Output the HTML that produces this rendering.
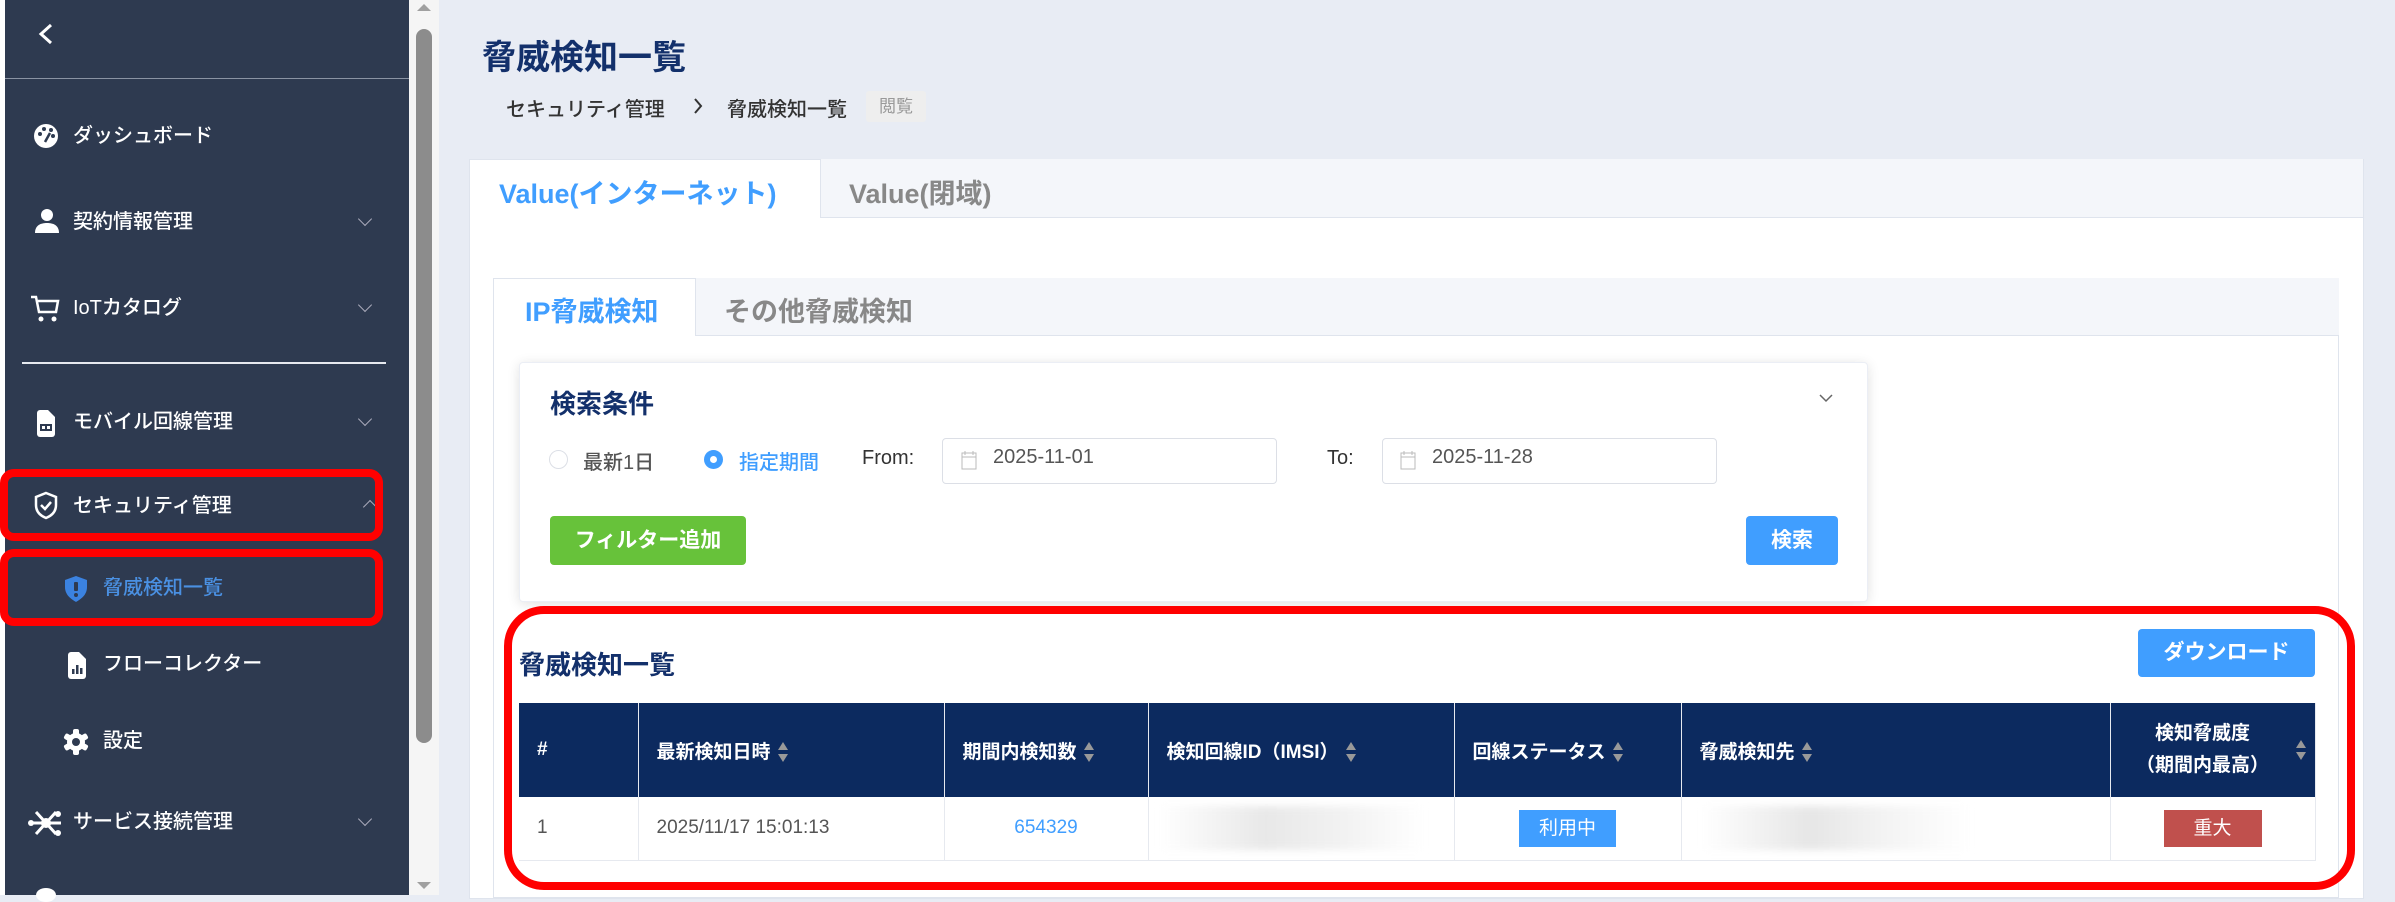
<!DOCTYPE html>
<html><head><meta charset="utf-8">
<style>
*{box-sizing:border-box;margin:0;padding:0}
body{width:2395px;height:895px;overflow:hidden;background:#e8ecf4;font-family:"Liberation Sans","Noto Sans CJK JP",sans-serif;position:relative}
.a{position:absolute}
.sb{left:5px;top:0;width:404px;height:895px;background:#2e3a50}
.mi{position:absolute;color:#fff;font-size:20px;line-height:24px;white-space:nowrap;font-weight:500}
.chev{position:absolute;left:360px;width:10px;height:10px;border-right:1.5px solid #aab;border-bottom:1.5px solid #aab;transform:rotate(45deg)}
.red{position:absolute;border:8px solid #ff0000;border-radius:14px}
.t{position:absolute;white-space:nowrap}
th,td{border-right:1px solid #e6e9ef}
.s{display:inline-block;vertical-align:middle;margin-left:6px}
</style></head><body>
<div style="position:absolute;left:0;top:0;width:5px;height:895px;background:#fff"></div>
<div class="a sb"></div>
<svg class="a" style="left:36px;top:22px" width="20" height="24" viewBox="0 0 20 24"><path d="M15 3L5 12l10 9" stroke="#fff" stroke-width="3" fill="none"/></svg>
<div class="a" style="left:5px;top:78px;width:404px;height:1px;background:#8a93a3"></div>
<svg class="a" style="left:32px;top:123px" width="28" height="26" viewBox="0 0 28 26"><circle cx="14" cy="13" r="12" fill="#fff"/><circle cx="8" cy="11" r="2" fill="#2e3a50"/><circle cx="12" cy="6" r="2" fill="#2e3a50"/><circle cx="19" cy="7" r="2" fill="#2e3a50"/><circle cx="21" cy="13" r="2" fill="#2e3a50"/><path d="M13 19l5-9" stroke="#2e3a50" stroke-width="2.5"/></svg>
<div class="mi" style="left:73px;top:124px">ダッシュボード</div>
<svg class="a" style="left:34px;top:208px" width="26" height="26" viewBox="0 0 26 26"><circle cx="13" cy="7" r="6" fill="#fff"/><path d="M1 25c0-8 6-10 12-10s12 2 12 10z" fill="#fff"/></svg>
<div class="mi" style="left:73px;top:210px">契約情報管理</div><div class="chev" style="top:214px"></div>
<svg class="a" style="left:29px;top:294px" width="32" height="30" viewBox="0 0 32 30"><path d="M2 3h5l3 15h17l2-11H9" stroke="#fff" stroke-width="2.5" fill="none"/><circle cx="12" cy="25" r="2.5" fill="#fff"/><circle cx="25" cy="25" r="2.5" fill="#fff"/></svg>
<div class="mi" style="left:73px;top:296px">IoTカタログ</div><div class="chev" style="top:300px"></div>
<div class="a" style="left:22px;top:362px;width:364px;height:2px;background:#e6e9ef"></div>
<svg class="a" style="left:35px;top:409px" width="22" height="28" viewBox="0 0 22 28"><path d="M2 4a3 3 0 013-3h8l7 7v17a3 3 0 01-3 3H5a3 3 0 01-3-3z" fill="#fff"/><rect x="5" y="15" width="12" height="7" fill="#2e3a50"/><rect x="7" y="17" width="3" height="3" fill="#fff"/><rect x="12" y="17" width="3" height="3" fill="#fff"/></svg>
<div class="mi" style="left:73px;top:410px">モバイル回線管理</div><div class="chev" style="top:414px"></div>
<svg class="a" style="left:33px;top:491px" width="26" height="30" viewBox="0 0 26 30"><path d="M13 2l10 4v8c0 7-5 11-10 13C8 25 3 21 3 14V6z" stroke="#fff" stroke-width="2.5" fill="none"/><path d="M8 14l4 4 6-7" stroke="#fff" stroke-width="2.5" fill="none"/></svg>
<div class="mi" style="left:73px;top:494px">セキュリティ管理</div>
<div class="a" style="left:365px;top:502px;width:10px;height:10px;border-left:1.5px solid #aab;border-top:1.5px solid #aab;transform:rotate(45deg)"></div>
<svg class="a" style="left:63px;top:575px" width="26" height="28" viewBox="0 0 26 28"><path d="M13 1l11 4v7c0 8-6 12-11 15C8 24 2 20 2 12V5z" fill="#3b82e0"/><rect x="11" y="7" width="4" height="9" rx="1" fill="#2e3a50"/><circle cx="13" cy="20" r="2" fill="#2e3a50"/></svg>
<div class="mi" style="left:103px;top:576px;color:#4a90e2">脅威検知一覧</div>
<svg class="a" style="left:66px;top:651px" width="22" height="28" viewBox="0 0 22 28"><path d="M2 4a3 3 0 013-3h8l7 7v17a3 3 0 01-3 3H5a3 3 0 01-3-3z" fill="#fff"/><rect x="6" y="18" width="2.5" height="5" fill="#2e3a50"/><rect x="10" y="14" width="2.5" height="9" fill="#2e3a50"/><rect x="14" y="17" width="2.5" height="6" fill="#2e3a50"/></svg>
<div class="mi" style="left:103px;top:652px">フローコレクター</div>
<svg class="a" style="left:62px;top:728px" width="28" height="28" viewBox="0 0 28 28"><g fill="#fff"><circle cx="14" cy="14" r="9"/><rect x="11" y="1" width="6" height="26" rx="2"/><rect x="11" y="1" width="6" height="26" rx="2" transform="rotate(60 14 14)"/><rect x="11" y="1" width="6" height="26" rx="2" transform="rotate(120 14 14)"/></g><circle cx="14" cy="14" r="4" fill="#2e3a50"/></svg>
<div class="mi" style="left:103px;top:729px">設定</div>
<svg class="a" style="left:28px;top:808px" width="36" height="30" viewBox="0 0 36 30"><g stroke="#fff" stroke-width="3"><path d="M3 15h30M8 4l20 22M28 4L8 26"/></g><circle cx="18" cy="15" r="5" fill="#fff"/><circle cx="3" cy="15" r="3" fill="#fff"/><circle cx="30" cy="6" r="3" fill="#fff"/><circle cx="30" cy="25" r="3" fill="#fff"/></svg>
<div class="mi" style="left:73px;top:810px">サービス接続管理</div><div class="chev" style="top:814px"></div>
<div class="a" style="left:36px;top:888px;width:20px;height:14px;border-radius:50%;background:#fff"></div>
<div class="red" style="left:0;top:469px;width:383px;height:72px"></div>
<div class="red" style="left:0;top:549px;width:383px;height:77px"></div>
<div class="a" style="left:409px;top:0;width:30px;height:895px;background:#f5f5f5"></div>
<div class="a" style="left:416px;top:29px;width:16px;height:714px;background:#8c8c8c;border-radius:8px"></div>
<div class="a" style="left:417px;top:4px;width:0;height:0;border-left:7px solid transparent;border-right:7px solid transparent;border-bottom:7px solid #a0a0a0"></div>
<div class="a" style="left:417px;top:882px;width:0;height:0;border-left:7px solid transparent;border-right:7px solid transparent;border-top:7px solid #a0a0a0"></div>

<div class="t" style="left:482px;top:30px;font-size:34px;font-weight:bold;color:#13306b">脅威検知一覧</div>
<div class="t" style="left:506px;top:93px;font-size:20px;color:#333;font-weight:500">セキュリティ管理</div>
<svg class="a" style="left:692px;top:96px" width="12" height="20" viewBox="0 0 12 20"><path d="M3 3l6 7-6 7" stroke="#333" stroke-width="2" fill="none"/></svg>
<div class="t" style="left:727px;top:93px;font-size:20px;color:#333;font-weight:500">脅威検知一覧</div>
<div class="t" style="left:866px;top:91px;width:60px;height:31px;background:#eeeeee;color:#999;font-size:17px;line-height:31px;text-align:center;border-radius:3px">閲覧</div>

<div class="a" style="left:469px;top:159px;width:1895px;height:740px;background:#fff;border:1px solid #dfe4ed"></div>
<div class="a" style="left:820px;top:159px;width:1544px;height:59px;background:#f4f6fa;border:1px solid #dfe4ed;border-top:none"></div>
<div class="t" style="left:499px;top:172px;font-size:27px;font-weight:bold;color:#409eff">Value(インターネット)</div>
<div class="t" style="left:849px;top:172px;font-size:27px;font-weight:bold;color:#888">Value(閉域)</div>

<div class="a" style="left:493px;top:278px;width:1846px;height:620px;background:#fff;border:1px solid #dfe4ed"></div>
<div class="a" style="left:695px;top:278px;width:1644px;height:58px;background:#f4f6fa;border-bottom:1px solid #dfe4ed;border-left:1px solid #dfe4ed"></div>
<div class="t" style="left:525px;top:290px;font-size:27px;font-weight:bold;color:#409eff">IP脅威検知</div>
<div class="t" style="left:724px;top:290px;font-size:27px;font-weight:bold;color:#888">その他脅威検知</div>

<div class="a" style="left:519px;top:362px;width:1349px;height:240px;background:#fff;border:1px solid #ebeef5;border-radius:4px;box-shadow:0 2px 12px rgba(0,0,0,.12)"></div>
<div class="t" style="left:550px;top:384px;font-size:26px;font-weight:bold;color:#13306b">検索条件</div>
<svg class="a" style="left:1819px;top:393px" width="14" height="10" viewBox="0 0 14 10"><path d="M1 2l6 6 6-6" stroke="#666" stroke-width="1.5" fill="none"/></svg>
<div class="a" style="left:549px;top:450px;width:19px;height:19px;border:1px solid #dcdfe6;border-radius:50%"></div>
<div class="t" style="left:583px;top:446px;font-size:20px;color:#555;font-weight:500">最新1日</div>
<div class="a" style="left:704px;top:450px;width:19px;height:19px;background:#409eff;border-radius:50%"></div>
<div class="a" style="left:710px;top:456px;width:7px;height:7px;background:#fff;border-radius:50%"></div>
<div class="t" style="left:739px;top:446px;font-size:20px;color:#409eff;font-weight:500">指定期間</div>
<div class="t" style="left:862px;top:447px;font-size:20px;color:#333">From:</div>
<div class="a" style="left:942px;top:438px;width:335px;height:46px;border:1px solid #dcdfe6;border-radius:4px"></div>
<svg class="a" style="left:961px;top:450px" width="16" height="20" viewBox="0 0 16 20"><rect x="1" y="3" width="14" height="16" fill="none" stroke="#bbb"/><path d="M1 7h14M4 1v4M12 1v4" stroke="#bbb"/></svg>
<div class="t" style="left:993px;top:446px;font-size:20px;color:#555">2025-11-01</div>
<div class="t" style="left:1327px;top:447px;font-size:20px;color:#333">To:</div>
<div class="a" style="left:1382px;top:438px;width:335px;height:46px;border:1px solid #dcdfe6;border-radius:4px"></div>
<svg class="a" style="left:1400px;top:450px" width="16" height="20" viewBox="0 0 16 20"><rect x="1" y="3" width="14" height="16" fill="none" stroke="#bbb"/><path d="M1 7h14M4 1v4M12 1v4" stroke="#bbb"/></svg>
<div class="t" style="left:1432px;top:446px;font-size:20px;color:#555">2025-11-28</div>
<div class="t" style="left:550px;top:516px;width:196px;height:49px;background:#67c23a;color:#fff;font-size:21px;font-weight:bold;line-height:49px;text-align:center;border-radius:4px">フィルター追加</div>
<div class="t" style="left:1746px;top:516px;width:92px;height:49px;background:#409eff;color:#fff;font-size:21px;font-weight:bold;line-height:49px;text-align:center;border-radius:4px">検索</div>

<div class="t" style="left:519px;top:645px;font-size:26px;font-weight:bold;color:#13306b">脅威検知一覧</div>
<div class="t" style="left:2138px;top:629px;width:177px;height:48px;background:#409eff;color:#fff;font-size:21px;font-weight:bold;line-height:48px;text-align:center;border-radius:4px">ダウンロード</div>

<table class="a" style="left:519px;top:703px;width:1796px;border-collapse:collapse;font-size:19px;table-layout:fixed">
<colgroup><col style="width:119px"><col style="width:306px"><col style="width:204px"><col style="width:306px"><col style="width:227px"><col style="width:429px"><col style="width:205px"></colgroup>
<tr style="background:#0c2a5f;color:#fff;font-weight:bold;height:94px">
<th style="text-align:left;padding-left:18px">#</th>
<th style="text-align:left;padding-left:18px">最新検知日時<svg class="s" width="12" height="22" viewBox="0 0 12 22"><path d="M6 1l5 8H1zM6 21l5-8H1z" fill="#999"/></svg></th>
<th style="text-align:left;padding-left:18px">期間内検知数<svg class="s" width="12" height="22" viewBox="0 0 12 22"><path d="M6 1l5 8H1zM6 21l5-8H1z" fill="#999"/></svg></th>
<th style="text-align:left;padding-left:18px">検知回線ID（IMSI）<svg class="s" width="12" height="22" viewBox="0 0 12 22"><path d="M6 1l5 8H1zM6 21l5-8H1z" fill="#999"/></svg></th>
<th style="text-align:left;padding-left:18px">回線ステータス<svg class="s" width="12" height="22" viewBox="0 0 12 22"><path d="M6 1l5 8H1zM6 21l5-8H1z" fill="#999"/></svg></th>
<th style="text-align:left;padding-left:18px">脅威検知先<svg class="s" width="12" height="22" viewBox="0 0 12 22"><path d="M6 1l5 8H1zM6 21l5-8H1z" fill="#999"/></svg></th>
<th style="line-height:32px;position:relative;padding-right:20px">検知脅威度<br>（期間内最高）<svg style="position:absolute;right:8px;top:36px" width="12" height="22" viewBox="0 0 12 22"><path d="M6 1l5 8H1zM6 21l5-8H1z" fill="#999"/></svg></th>
</tr>
<tr style="height:63px;color:#555;border-bottom:1px solid #e6e9ef">
<td style="padding-left:18px">1</td>
<td style="padding-left:18px">2025/11/17 15:01:13</td>
<td style="text-align:center;color:#409eff">654329</td>
<td><div style="margin:0 30px 0 10px;height:44px;background:linear-gradient(90deg,#fff,#e8e8e8 40%,#f2f2f2 70%,#fff);filter:blur(4px)"></div></td>
<td style="text-align:center"><span style="display:inline-block;width:97px;height:37px;line-height:37px;background:#409eff;color:#fff">利用中</span></td>
<td><div style="margin:0 140px 0 20px;height:44px;background:linear-gradient(90deg,#fff,#e6e6e6 40%,#f4f4f4 70%,#fff);filter:blur(4px)"></div></td>
<td style="text-align:center"><span style="display:inline-block;width:98px;height:37px;line-height:37px;background:#c0504d;color:#fff">重大</span></td>
</tr>
</table>

<div class="red" style="left:504px;top:606px;width:1851px;height:284px;border-radius:40px"></div>
</body></html>
